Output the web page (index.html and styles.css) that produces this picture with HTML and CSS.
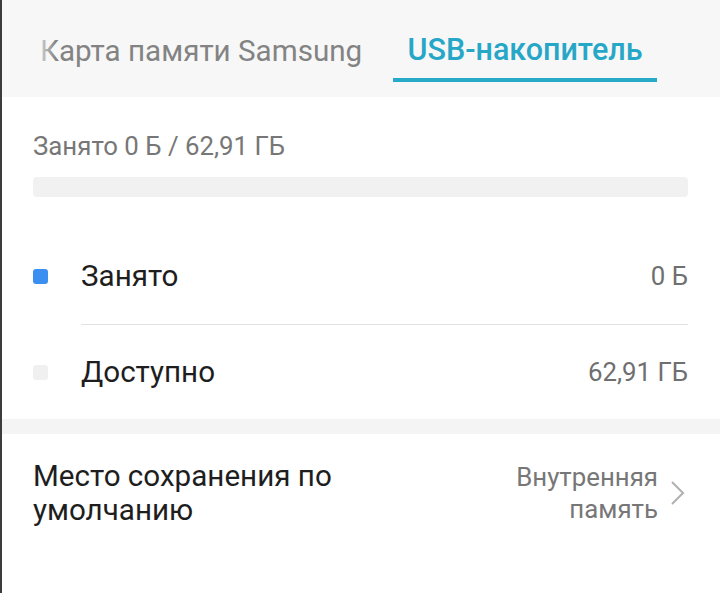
FILE: index.html
```html
<!DOCTYPE html>
<html lang="ru">
<head>
<meta charset="utf-8">
<link rel="stylesheet" href="styles.css">
</head>
<body>
<div class="screen">
  <header class="tabs">
    <div class="tab tab-inactive">Карта памяти Samsung</div>
    <div class="tab tab-active">USB-накопитель</div>
  </header>

  <section class="summary">
    <div class="summary-text">Занято 0 Б / 62,91 ГБ</div>
    <div class="bar"></div>
  </section>

  <section class="legend">
    <div class="legend-row">
      <span class="dot dot-used"></span>
      <div class="legend-body">
        <span class="legend-label">Занято</span>
        <span class="legend-value">0 Б</span>
      </div>
    </div>
    <div class="legend-row">
      <span class="dot dot-free"></span>
      <div class="legend-body legend-body-last">
        <span class="legend-label">Доступно</span>
        <span class="legend-value">62,91 ГБ</span>
      </div>
    </div>
  </section>

  <div class="spacer-band"></div>

  <section class="setting">
    <div class="setting-title">Место сохранения по умолчанию</div>
    <div class="setting-right">
      <div class="setting-value">Внутренняя<br>память</div>
      <svg class="chevron" width="16" height="26" viewBox="0 0 16 26"><path d="M2 2 L13 13 L2 24" fill="none" stroke="#b0b0b0" stroke-width="2"/></svg>
    </div>
  </section>
</div>
</body>
</html>
```

FILE: styles.css
```css
html, body {
  margin: 0;
  padding: 0;
  background: #ffffff;
}
body {
  font-family: Roboto, "Noto Sans", "Liberation Sans", sans-serif;
}
.screen {
  width: 718px;
  height: 593px;
  border-left: 2px solid #3c3c3c;
  overflow: hidden;
  background: #ffffff;
}
.tabs {
  height: 97px;
  background: #f7f7f7;
  display: flex;
  align-items: flex-start;
  position: relative;
}
.tabs::before {
  content: "";
  position: absolute;
  left: 36px;
  top: 30px;
  width: 18px;
  height: 40px;
  background: linear-gradient(to right, rgba(247,247,247,0.75), rgba(247,247,247,0));
}
.tab {
  display: flex;
  align-items: center;
  box-sizing: border-box;
  font-size: 29.6px;
  height: 82px;
  line-height: 36px;
}
.tab-inactive {
  color: #838383;
  padding-left: 38px;
  padding-top: 20px;
  width: 391px;
}
.tab-active {
  color: #27a7c7;
  font-weight: 500;
  font-size: 30.5px;
  width: 264px;
  justify-content: center;
  border-bottom: 4px solid #27a9c9;
  padding-top: 22px;
}
.summary {
  padding: 32px 32px 0 31px;
}
.summary-text {
  font-size: 25.8px;
  color: #777777;
  line-height: 34px;
}
.bar {
  margin-top: 14px;
  height: 20px;
  border-radius: 4px;
  background: #f1f1f1;
}
.legend {
  padding: 30px 32px 0 31px;
}
.legend-row {
  display: flex;
  align-items: stretch;
}
.dot {
  width: 15px;
  height: 15px;
  border-radius: 3px;
  margin-right: 33px;
  align-self: center;
}
.dot-used { background: #3a8ff0; }
.dot-free { background: #f0f0f0; }
.legend-body {
  flex: 1;
  display: flex;
  justify-content: space-between;
  align-items: center;
  height: 97px;
  border-bottom: 1px solid #e2e2e2;
}
.legend-body-last {
  border-bottom: none;
  height: 94px;
}
.legend-label {
  font-size: 29.6px;
  color: #1e1e1e;
}
.legend-value {
  font-size: 25.8px;
  color: #6f6f6f;
}
.spacer-band {
  height: 15px;
  background: #f4f4f4;
}
.setting {
  display: flex;
  justify-content: space-between;
  align-items: center;
  padding: 25px 34px 0 31px;
}
.setting-title {
  font-size: 29.6px;
  color: #1e1e1e;
  line-height: 34px;
  width: 340px;
}
.setting-right {
  display: flex;
  align-items: center;
  gap: 12px;
}
.setting-value {
  font-size: 25.8px;
  color: #777777;
  line-height: 32px;
  text-align: right;
}
.chevron {
  display: block;
}
```
